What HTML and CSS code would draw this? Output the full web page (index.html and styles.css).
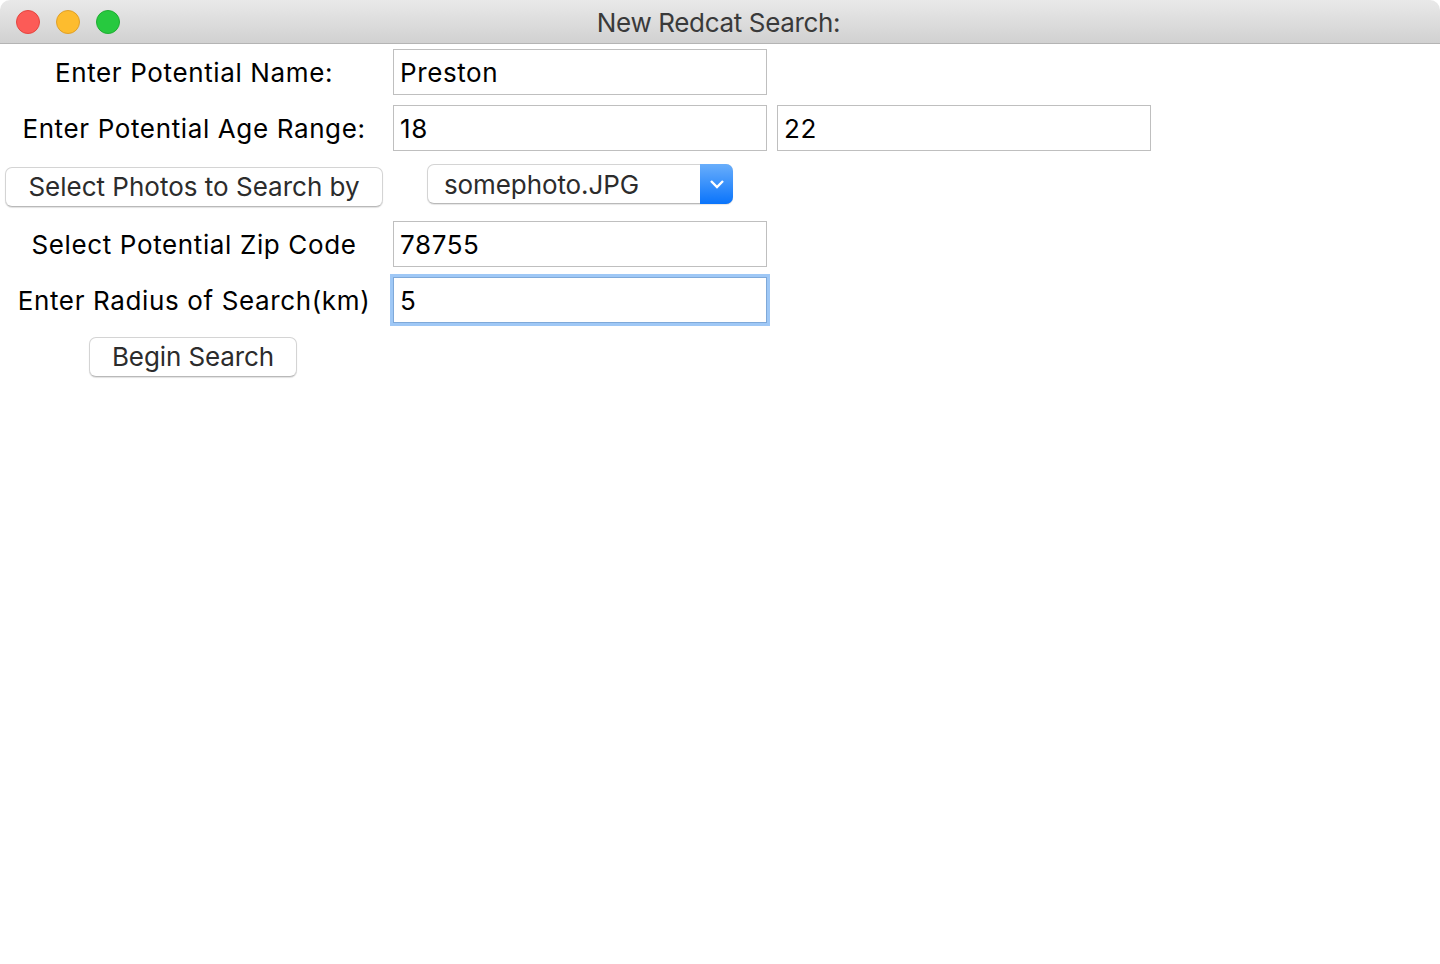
FILE: index.html
```html
<!DOCTYPE html>
<html lang="en">
<head>
  <meta charset="UTF-8" />
  <title>New Redcat Search:</title>
  <link rel="stylesheet" href="styles.css">
</head>
<body>

  <!-- Title bar -->
  <div class="titlebar">
    <div class="traffic">
      <span class="light red"></span>
      <span class="light yellow"></span>
      <span class="light green"></span>
    </div>
    <div class="title">New Redcat Search:</div>
  </div>

  <!-- Search form -->
  <form class="form">
    <label class="label">Enter Potential Name:</label>
    <input class="field" type="text" value="Preston" />
    <span></span>

    <label class="label">Enter Potential Age Range:</label>
    <input class="field" type="text" value="18" />
    <input class="field" type="text" value="22" />

    <button class="btn btn-photos" type="button">Select Photos to Search by</button>
    <div class="select">
      <span class="select-text">somephoto.JPG</span>
      <span class="select-arrow">
        <svg width="16" height="10" viewBox="0 0 16 10"><path d="M2 2l6 6 6-6" fill="none" stroke="#fff" stroke-width="2.4"/></svg>
      </span>
    </div>
    <span></span>

    <label class="label">Select Potential Zip Code</label>
    <input class="field" type="text" value="78755" />
    <span></span>

    <label class="label">Enter Radius of Search(km)</label>
    <input class="field focused" type="text" value="5" />
    <span></span>

    <button class="btn btn-begin" type="button">Begin Search</button>
  </form>

</body>
</html>
```

FILE: styles.css
```css
html, body {
  margin: 0;
  height: 100%;
  background: #fff;
}
body {
  font-family: Inter, "Liberation Sans", sans-serif;
  overflow: hidden;
}
.titlebar {
  height: 43px;
  border-bottom: 1px solid #b4b4b4;
  border-radius: 10px 10px 0 0;
  background: linear-gradient(#e9e9e9, #d1d1d1);
  display: flex;
  align-items: center;
  justify-content: center;
  position: relative;
}
.traffic {
  position: absolute;
  left: 16px;
  top: 10px;
  display: flex;
  gap: 16px;
}
.light {
  width: 22px;
  height: 22px;
  border-radius: 50%;
  border: 1px solid;
}
.red { background: #fc5b57; border-color: #e5453f; }
.yellow { background: #fdbc2e; border-color: #e0a028; }
.green { background: #27c93f; border-color: #1fad32; }
.title {
  font-size: 26px;
  color: #3a3a3a;
  letter-spacing: -0.35px;
  margin: 2px 3px 0 0;
}
.form {
  display: grid;
  grid-template-columns: 388px 384px 384px;
  grid-template-rows: 56px 56px 60px 56px 56px 58px;
}
.label {
  font-size: 26px;
  color: #000;
  display: flex;
  align-items: center;
  justify-content: center;
  white-space: nowrap;
  letter-spacing: 0.63px;
}
.field {
  font-family: inherit;
  font-size: 26px;
  letter-spacing: 0.6px;
  color: #000;
  height: 46px;
  width: 374px;
  margin: 5px;
  padding: 0 6px;
  box-sizing: border-box;
  border: 1px solid #bfbfbf;
  outline: none;
}
.focused {
  border-color: #7fa9d9;
  box-shadow: 0 0 0 3px #9fc8f6;
}
.btn {
  font-family: inherit;
  font-size: 26px;
  color: #2c2c2c;
  height: 40px;
  background: #fff;
  border: 1px solid #d4d4d4;
  border-bottom-color: #b9b9b9;
  border-radius: 7px;
  box-shadow: 0 1px 1px rgba(0, 0, 0, 0.12);
  padding: 0 0 2px;
  white-space: nowrap;
}
.btn-photos {
  width: 378px;
  margin: 11px 0 0 5px;
}
.btn-begin {
  width: 208px;
  margin: 9px 0 0 89px;
  letter-spacing: -0.1px;
}
.select {
  width: 306px;
  height: 40px;
  margin: 8px 0 0 39px;
  box-sizing: border-box;
  display: flex;
  background: #fff;
  border: 1px solid #d4d4d4;
  border-bottom-color: #b9b9b9;
  border-radius: 7px;
  box-shadow: 0 1px 1px rgba(0, 0, 0, 0.1);
}
.select-text {
  flex: 1;
  font-size: 26px;
  letter-spacing: -0.1px;
  color: #2c2c2c;
  line-height: 40px;
  padding-left: 16px;
}
.select-arrow {
  width: 33px;
  margin: -1px -1px -1px 0;
  border-radius: 0 7px 7px 0;
  background: linear-gradient(#69aefb, #0a74fb);
  display: flex;
  align-items: center;
  justify-content: center;
}
```
